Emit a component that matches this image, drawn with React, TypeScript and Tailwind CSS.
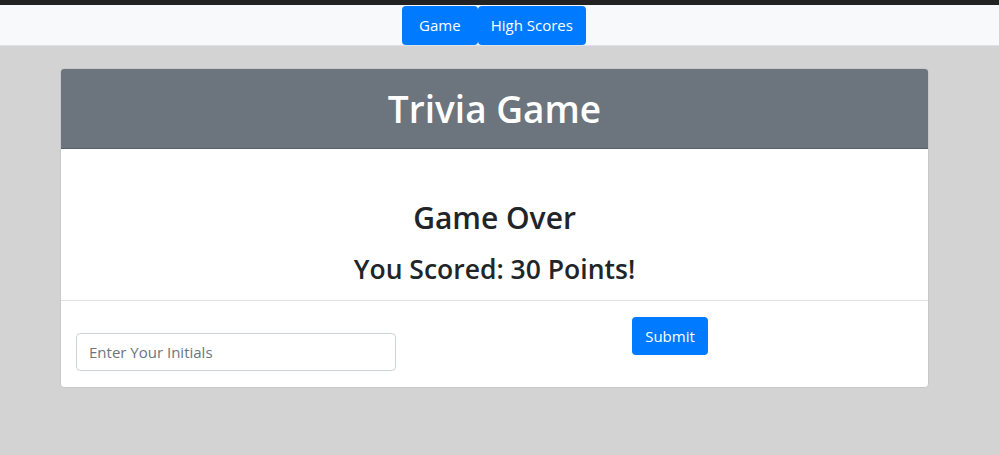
import React from 'react';

const font = { fontFamily: '"Open Sans", "Noto Sans", sans-serif' };

export default function App() {
  return (
    <div className="min-h-[455px] bg-[#d3d3d3] text-[#212529]" style={font}>
      <div className="h-[5px] bg-[#222222]" />
      <nav className="flex h-[41px] items-center justify-center border-b border-[#dee2e6] bg-[#f8f9fa] pr-[11px]">
        <button className="h-[39px] rounded-[4px] bg-[#007bff] px-[17px] text-[15px] text-white">
          Game
        </button>
        <button className="h-[39px] rounded-[4px] bg-[#007bff] px-[13px] text-[15px] text-white">
          High Scores
        </button>
      </nav>

      <div className="mx-[60px] mt-[22px] w-[869px] overflow-hidden rounded-[4px] border border-[#c8c8c8] bg-white">
        <div className="flex h-[80px] items-center justify-center border-b border-[#5a6268] bg-[#6c757d]">
          <h1 className="text-[37px] font-semibold text-white">Trivia Game</h1>
        </div>

        <div className="flex flex-col items-center pt-[50px] pb-[14px]">
          <h2 className="text-[30px] leading-[38px] font-semibold">Game Over</h2>
          <h3 className="mt-[15px] text-[26.5px] leading-[34px] font-semibold">You Scored: 30 Points!</h3>
        </div>

        <div className="flex items-start border-t border-[#dee2e6] px-[15px] pt-[16px] pb-[16px]">
          <input
            className="mt-[16px] h-[38px] w-[320px] rounded-[4px] border border-[#ced4da] px-[12px] text-[15px] placeholder:text-[#6c757d] outline-none"
            placeholder="Enter Your Initials"
          />
          <button className="ml-[236px] h-[38px] w-[76px] rounded-[4px] bg-[#007bff] text-[15px] text-white">
            Submit
          </button>
        </div>
      </div>
    </div>
  );
}
